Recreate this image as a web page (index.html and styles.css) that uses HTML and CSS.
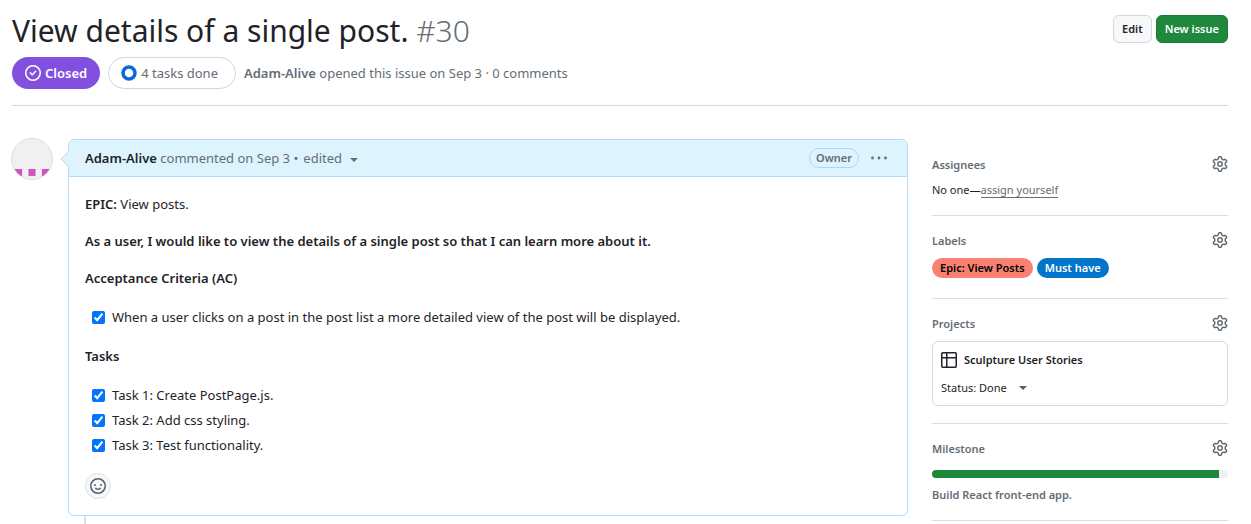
FILE: index.html
```html
<!DOCTYPE html>
<html lang="en">
<head>
<meta charset="utf-8">
<title>View details of a single post. #30</title>
<link rel="stylesheet" href="styles.css">
</head>
<body>
<svg class="sprite" aria-hidden="true">
  <symbol id="gear" viewBox="0 0 16 16"><path d="M8 0a8.2 8.2 0 0 1 .701.031C9.444.095 9.99.645 10.16 1.29l.288 1.107c.018.066.079.158.212.224.231.114.454.243.668.386.123.082.233.09.299.071l1.103-.303c.644-.176 1.392.021 1.82.63.27.385.506.792.704 1.218.315.675.111 1.422-.364 1.891l-.814.806c-.049.048-.098.147-.088.294.016.257.016.515 0 .772-.01.147.038.246.088.294l.814.806c.475.469.679 1.216.364 1.891a7.977 7.977 0 0 1-.704 1.217c-.428.61-1.176.807-1.82.63l-1.102-.302c-.067-.019-.177-.011-.3.071a5.909 5.909 0 0 1-.668.386c-.133.066-.194.158-.211.224l-.29 1.106c-.168.646-.715 1.196-1.458 1.26a8.006 8.006 0 0 1-1.402 0c-.743-.064-1.289-.614-1.458-1.26l-.289-1.106c-.018-.066-.079-.158-.212-.224a5.738 5.738 0 0 1-.668-.386c-.123-.082-.233-.09-.299-.071l-1.103.303c-.644.176-1.392-.021-1.82-.63a8.12 8.12 0 0 1-.704-1.218c-.315-.675-.111-1.422.363-1.891l.815-.806c.05-.048.098-.147.088-.294a6.214 6.214 0 0 1 0-.772c.01-.147-.038-.246-.088-.294l-.815-.806C.635 6.045.431 5.298.746 4.623a7.92 7.92 0 0 1 .704-1.217c.428-.61 1.176-.807 1.82-.63l1.102.302c.067.019.177.011.3-.071.214-.143.437-.272.668-.386.133-.066.194-.158.211-.224l.29-1.106C6.009.645 6.556.095 7.299.03 7.53.01 7.764 0 8 0Zm-.571 1.525c-.036.003-.108.036-.137.146l-.289 1.105c-.147.561-.549.967-.998 1.189-.173.086-.34.183-.5.29-.417.278-.97.423-1.529.27l-1.103-.303c-.109-.03-.175.016-.195.045-.22.312-.412.644-.573.99-.014.031-.021.11.059.19l.815.806c.411.406.562.957.53 1.456a4.709 4.709 0 0 0 0 .582c.032.499-.119 1.05-.53 1.456l-.815.806c-.081.08-.073.159-.059.19.162.346.353.677.573.989.02.03.085.076.195.046l1.102-.303c.56-.153 1.113-.008 1.53.27.161.107.328.204.501.29.447.222.85.629.997 1.189l.289 1.105c.029.109.101.143.137.146a6.6 6.6 0 0 0 1.142 0c.036-.003.108-.036.137-.146l.289-1.105c.147-.561.549-.967.998-1.189.173-.086.34-.183.5-.29.417-.278.97-.423 1.529-.27l1.103.303c.109.029.175-.016.195-.045.22-.313.411-.644.573-.99.014-.031.021-.11-.059-.19l-.815-.806c-.411-.406-.562-.957-.53-1.456a4.709 4.709 0 0 0 0-.582c-.032-.499.119-1.05.53-1.456l.815-.806c.081-.08.073-.159.059-.19a6.464 6.464 0 0 0-.573-.989c-.02-.03-.085-.076-.195-.046l-1.102.303c-.56.153-1.113.008-1.53-.27a4.44 4.44 0 0 0-.501-.29c-.447-.222-.85-.629-.997-1.189l-.289-1.105c-.029-.11-.101-.143-.137-.146a6.6 6.6 0 0 0-1.142 0ZM11 8a3 3 0 1 1-6 0 3 3 0 0 1 6 0ZM9.5 8a1.5 1.5 0 1 0-3.001.001A1.5 1.5 0 0 0 9.5 8Z"/></symbol>
</svg>
<div class="page">
  <header class="issue-header">
    <div class="title-row">
      <h1 class="title">View details of a single post. <span class="number">#30</span></h1>
      <div class="actions">
        <button class="btn" type="button">Edit</button>
        <button class="btn btn-primary" type="button">New issue</button>
      </div>
    </div>
    <div class="meta-row">
      <span class="state">
        <svg class="icon" viewBox="0 0 16 16" fill="currentColor" aria-hidden="true"><path d="M11.28 6.78a.75.75 0 0 0-1.06-1.06L7.25 8.69 5.78 7.22a.75.75 0 0 0-1.06 1.06l2 2a.75.75 0 0 0 1.06 0l3.5-3.5Z"/><path d="M16 8A8 8 0 1 1 0 8a8 8 0 0 1 16 0Zm-1.5 0a6.5 6.5 0 1 0-13 0 6.5 6.5 0 0 0 13 0Z"/></svg>
        Closed
      </span>
      <span class="progress-pill">
        <svg class="icon" viewBox="0 0 16 16" fill="none" stroke="#0969da" stroke-width="3.500" aria-hidden="true"><circle cx="8" cy="8" r="6"/></svg>
        4 tasks done
      </span>
      <span class="byline"><b>Adam-Alive</b> opened this issue on Sep 3 · 0 comments</span>
    </div>
  </header>

  <div class="columns">
    <svg class="avatar" viewBox="0 0 42 42" role="img" aria-label="Adam-Alive">
      <clipPath id="round"><circle cx="21" cy="21" r="20.5"/></clipPath>
      <g clip-path="url(#round)"><path fill="#f0f0f0" d="M0 0h42v42H0z"/><path fill="#d250c0" d="M4 31h7v7H4zM17.500 31h7v7h-7zM31 31h7v7h-7z"/></g>
      <circle cx="21" cy="21" r="20.500" fill="none" stroke="#dcdee0"/>
    </svg>
    <main class="thread">
      <article class="comment">
        <svg class="pointer" viewBox="0 0 9 16" aria-hidden="true"><path fill="#ddf4ff" d="M9 0 1 8l8 8z"/><path fill="none" stroke="#b0dcff" d="M8.500.5 1 8l7.500 7.500"/></svg>
        <div class="comment-header">
          <span class="comment-by"><b>Adam-Alive</b> commented on Sep 3 •</span>
          <button class="edited" type="button">edited <span class="caret"></span></button>
          <span class="owner">Owner</span>
          <button class="kebab" type="button" aria-label="Show options"><svg class="icon" viewBox="0 0 16 16" fill="currentColor" aria-hidden="true"><circle cx="1.500" cy="8" r="1.400"/><circle cx="8" cy="8" r="1.400"/><circle cx="14.500" cy="8" r="1.400"/></svg></button>
        </div>
        <div class="comment-body">
          <p><b>EPIC:</b> View posts.</p>
          <p><b>As a user, I would like to view the details of a single post so that I can learn more about it.</b></p>
          <p><b>Acceptance Criteria (AC)</b></p>
          <ul class="tasks">
            <li><label><input type="checkbox" checked>When a user clicks on a post in the post list a more detailed view of the post will be displayed.</label></li>
          </ul>
          <p><b>Tasks</b></p>
          <ul class="tasks">
            <li><label><input type="checkbox" checked>Task 1: Create PostPage.js.</label></li>
            <li><label><input type="checkbox" checked>Task 2: Add css styling.</label></li>
            <li><label><input type="checkbox" checked>Task 3: Test functionality.</label></li>
          </ul>
          <button class="react" type="button" aria-label="Add reaction"><svg class="icon" viewBox="0 0 16 16" fill="currentColor" aria-hidden="true"><path d="M8 0a8 8 0 1 1 0 16A8 8 0 0 1 8 0ZM1.500 8a6.500 6.500 0 1 0 13 0 6.500 6.500 0 0 0-13 0Z"/><path d="M5 8a1 1 0 1 0 0-2 1 1 0 0 0 0 2Zm6 0a1 1 0 1 0 0-2 1 1 0 0 0 0 2ZM5.320 9.636a.75.75 0 0 1 1.038.175l.007.009c.103.118.220.222.350.310.264.178.683.370 1.285.370.602 0 1.020-.192 1.285-.371.130-.088.247-.192.350-.310l.007-.008a.75.75 0 0 1 1.222.870l-.614-.431c.614.430.614.431.613.431v.001l-.001.002-.002.003-.005.007-.014.019a2.066 2.066 0 0 1-.184.213c-.160.166-.338.316-.530.445-.630.418-1.370.638-2.127.629-.946 0-1.652-.308-2.126-.630a3.331 3.331 0 0 1-.715-.657l-.014-.020-.005-.006-.002-.003v-.002h-.001l.613-.432-.614.430a.75.75 0 0 1 .183-1.044Z"/></svg></button>
        </div>
      </article>
      <div class="rail"></div>
    </main>
    <aside class="sidebar">
      <section class="block">
        <div class="block-head"><h2>Assignees</h2><button class="gear" type="button" aria-label="Edit assignees"><svg class="icon" fill="currentColor"><use href="#gear"/></svg></button></div>
        <p class="assign">No one—<a href="#">assign yourself</a></p>
      </section>
      <section class="block">
        <div class="block-head"><h2>Labels</h2><button class="gear" type="button" aria-label="Edit labels"><svg class="icon" fill="currentColor"><use href="#gear"/></svg></button></div>
        <div class="labels"><a class="label label-epic" href="#">Epic: View Posts</a><a class="label label-must" href="#">Must have</a></div>
      </section>
      <section class="block">
        <div class="block-head"><h2>Projects</h2><button class="gear" type="button" aria-label="Edit projects"><svg class="icon" fill="currentColor"><use href="#gear"/></svg></button></div>
        <div class="project">
          <a class="project-name" href="#"><svg class="icon" viewBox="0 0 16 16" fill="currentColor" aria-hidden="true"><path d="M0 1.750C0 .784.784 0 1.750 0h12.500C15.216 0 16 .784 16 1.750v12.500A1.750 1.750 0 0 1 14.250 16H1.750A1.750 1.750 0 0 1 0 14.250ZM6.500 6.500v8h7.750a.25.25 0 0 0 .250-.250V6.500Zm8-1.500V1.750a.25.25 0 0 0-.250-.250H6.500V5Zm-13 1.500v7.750c0 .138.112.250.250.250H5v-8ZM5 5V1.500H1.750a.25.25 0 0 0-.250.250V5Z"/></svg>Sculpture User Stories</a>
          <button class="status" type="button">Status: Done <span class="caret"></span></button>
        </div>
      </section>
      <section class="block">
        <div class="block-head"><h2>Milestone</h2><button class="gear" type="button" aria-label="Edit milestone"><svg class="icon" fill="currentColor"><use href="#gear"/></svg></button></div>
        <div class="bar"><div class="bar-fill" style="width:97%"></div></div>
        <a class="milestone" href="#">Build React front-end app.</a>
      </section>
    </aside>
  </div>
</div>
</body>
</html>
```
FILE: styles.css
```css
* { box-sizing: border-box; }
html { overflow: hidden; }
body {
  margin: 0;
  background: #fff;
  color: #1f2328;
  font: 13px/21px "Noto Sans", "Open Sans", sans-serif;
}
h1, h2, p, ul { margin: 0; padding: 0; font-weight: 400; }
b { font-weight: 600; }
a { color: inherit; text-decoration: none; }
button {
  padding: 0;
  border: 0;
  background: none;
  color: inherit;
  font: inherit;
  cursor: pointer;
}
.sprite { position: absolute; width: 0; height: 0; }
.icon { display: block; flex: none; width: 16px; height: 16px; }
.page { padding: 8px 23px 0 12px; }

.issue-header { border-bottom: 1px solid #d0d7de; padding-bottom: 16px; }
.title-row { display: flex; justify-content: space-between; align-items: flex-start; }
.title { font-size: 30px; line-height: 45px; }
.number { color: #656d76; font-weight: 300; }
.actions { display: flex; gap: 4px; padding-top: 7px; }
.btn {
  height: 28px;
  padding: 0 8px;
  border: 1px solid #d0d7de;
  border-radius: 6px;
  background: #f6f8fa;
  font-size: 11px;
  font-weight: 600;
  line-height: 18px;
}
.btn-primary { border-color: #1f7a37; background: #1f883d; color: #fff; }
.meta-row { display: flex; align-items: center; gap: 8px; margin-top: 4px; color: #656d76; }
.state, .progress-pill { display: flex; align-items: center; height: 32px; border-radius: 16px; gap: 4px; }
.state { padding: 0 13px; background: #8250df; color: #fff; font-weight: 600; }
.progress-pill { padding: 0 17px 0 12px; border: 1px solid #d0d7de; }

.columns { display: flex; align-items: flex-start; padding-top: 33px; }
.avatar { flex: none; width: 42px; height: 42px; margin: -1px 15px 0 -1px; }
.thread { flex: 1; min-width: 0; }
.comment { position: relative; border: 1px solid #b0dcff; border-radius: 6px; }
.pointer { position: absolute; left: -9px; top: 11px; width: 9px; height: 16px; }
.comment-header {
  display: flex;
  align-items: center;
  gap: 5px;
  height: 37px;
  padding: 0 20px 0 16px;
  border-bottom: 1px solid #b0dcff;
  border-radius: 5px 5px 0 0;
  background: #ddf4ff;
  color: #656d76;
}
.comment-by b { color: #1f2328; }
.edited, .status { display: flex; align-items: center; gap: 8px; }
.caret { border: 4px solid transparent; border-top-color: currentColor; border-bottom: 0; }
.edited .caret { margin-top: 4px; }
.owner {
  margin-left: auto;
  padding: 0 6px;
  border: 1px solid #a8d8ff;
  border-radius: 10px;
  font-size: 11px;
  font-weight: 600;
  line-height: 18px;
}
.kebab { margin-left: 7px; }
.comment-body { display: flex; flex-direction: column; align-items: flex-start; gap: 16px; padding: 17px 16px 16px; }
.tasks { display: grid; padding-left: 7px; list-style: none; }
.tasks label { display: flex; align-items: center; gap: 7px; line-height: 25px; }
.tasks input { width: 13px; height: 13px; margin: 0; accent-color: #0075ff; }
.react {
  display: grid;
  place-items: center;
  width: 26px;
  height: 26px;
  margin-top: -1px;
  border: 1px solid #dce1e6;
  border-radius: 13px;
  background: #f6f8fa;
  color: #57606a;
}
.rail { width: 2px; height: 16px; margin-left: 16px; background: #d8dee4; }

.sidebar { flex: none; width: 296px; margin-left: 24px; padding-top: 17px; font-size: 11px; line-height: 18px; }
.block { margin-bottom: 16px; border-bottom: 1px solid #d8dee4; padding-bottom: 16px; }
.block-head { display: flex; justify-content: space-between; align-items: flex-start; color: #656d76; margin-bottom: 7px; }
.block-head h2 { font-size: 11px; font-weight: 600; line-height: 18px; }
.assign a { border-bottom: 1px solid #656d76; color: #656d76; }
.labels { display: flex; gap: 4px; padding: 1px 0 4px; }
.label { padding: 0 8px; border-radius: 10px; font-weight: 600; line-height: 20px; }
.label-epic { background: #fa8072; color: #000; }
.label-must { background: #0075ca; color: #fff; }
.project { display: grid; justify-items: start; gap: 10px; margin: 8px 0 1px; padding: 9px 8px 8px; border: 1px solid #d0d7de; border-radius: 6px; }
.project-name { display: flex; align-items: center; gap: 7px; font-weight: 600; }
.status .caret { margin-left: 4px; color: #57606a; }
.bar { height: 8px; margin-top: 12px; overflow: hidden; border-radius: 4px; background: #eff1f3; }
.bar-fill { height: 100%; background: #1f883d; }
.milestone { display: block; margin-top: 8px; color: #656d76; font-weight: 600; }
```
